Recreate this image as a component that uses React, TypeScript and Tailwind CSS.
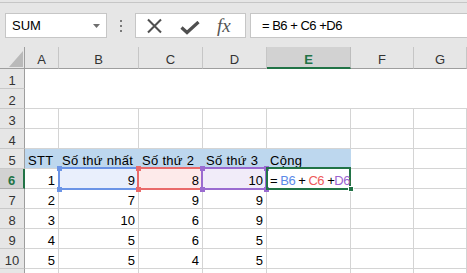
import React from "react";

const COLS = ["A", "B", "C", "D", "E", "F", "G"];
const W = ["w-[34px]", "w-[80px]", "w-[64px]", "w-[64px]", "w-[84px]", "w-[63px]", "w-[53px]"];

const cellBase =
  "relative shrink-0 h-full border-r border-b border-[#d4d4d4] px-[3px] pt-[5px] leading-[14px] text-[13px] whitespace-nowrap text-black";

function RowHeader({ n, active }: { n: number | null; active?: boolean }) {
  return active ? (
    <div className="w-[25px] shrink-0 h-full bg-[#d2d2d2] border-b border-[#ababab] border-r-2 border-r-[#217346] text-center pt-[5px] leading-[14px] text-[13px] font-bold text-[#217346]">
      {n}
    </div>
  ) : (
    <div className="w-[25px] shrink-0 h-full bg-[#e6e6e6] border-b border-[#c8c8c8] border-r border-r-[#9e9e9e] text-center pt-[5px] leading-[14px] text-[13px] text-[#333]">
      {n}
    </div>
  );
}

function Handles({ color }: { color: string }) {
  return (
    <>
      <div className={`absolute left-[-1px] top-[-1px] w-[5px] h-[5px] ${color}`} />
      <div className={`absolute right-[-2px] top-[-1px] w-[5px] h-[5px] ${color}`} />
      <div className={`absolute left-[-1px] bottom-[-2px] w-[5px] h-[5px] ${color}`} />
      <div className={`absolute right-[-2px] bottom-[-2px] w-[5px] h-[5px] ${color}`} />
    </>
  );
}

function DataRow({ n, vals }: { n: number | null; vals: (string | null)[] }) {
  return (
    <div className="flex h-[20px]">
      <RowHeader n={n} />
      {W.map((w, i) => (
        <div key={i} className={`${cellBase} ${w} text-right`}>
          {vals[i] ?? ""}
        </div>
      ))}
    </div>
  );
}

export default function App() {
  const data: [number | null, (string | null)[]][] = [
    [7, ["2", "7", "9", "9", null, null, null]],
    [8, ["3", "10", "6", "9", null, null, null]],
    [9, ["4", "5", "6", "5", null, null, null]],
    [10, ["5", "5", "4", "5", null, null, null]],
    [null, [null, null, null, null, null, null, null]],
  ];
  const headers5 = ["STT", "Số thứ nhất", "Số thứ 2", "Số thứ 3", "Cộng"];

  return (
    <div className="w-[467px] h-[273px] overflow-hidden bg-[#e6e6e6] font-['Liberation_Sans',Arial,sans-serif]">
      {/* top strip */}
      <div className="h-[3px] border-b border-[#c6c6c6] bg-[#e6e6e6]" />
      {/* formula toolbar */}
      <div className="h-[44px] pt-[10px] flex items-start">
        <div className="ml-[5px] w-[102px] h-[25px] bg-white border border-[#c6c6c6] flex items-center pl-[6px] pr-[6px] text-[13px] text-black">
          <span className="flex-1 leading-[14px]">SUM</span>
          <svg width="7" height="4" viewBox="0 0 7 4">
            <path d="M0 0 L7 0 L3.5 4 Z" fill="#6e6e6e" />
          </svg>
        </div>
        <div className="w-[28px] h-[25px] flex flex-col items-center justify-center gap-[3px]">
          <div className="w-[2px] h-[2px] bg-[#7a7a7a]" />
          <div className="w-[2px] h-[2px] bg-[#7a7a7a]" />
          <div className="w-[2px] h-[2px] bg-[#7a7a7a]" />
        </div>
        <div className="w-[111px] h-[25px] bg-white border border-[#c6c6c6] flex items-center">
          <svg width="18" height="16" viewBox="0 0 18 16" className="ml-[10px]">
            <path d="M2 1.5 L15 14.5 M15 1.5 L2 14.5" stroke="#4f4f4f" strokeWidth="2.1" />
          </svg>
          <svg width="20" height="14" viewBox="0 0 20 14" className="ml-[16px] mt-[4px]">
            <path d="M1.5 6.5 L7 11.5 L18.5 1" stroke="#4f4f4f" strokeWidth="3.2" fill="none" />
          </svg>
          <span className="ml-[17px] font-['Liberation_Serif',serif] italic text-[19px] leading-[20px] text-[#555]">fx</span>
        </div>
        <div className="ml-[4px] flex-1 h-[25px] bg-white border border-[#c6c6c6] border-r-0 flex items-center pl-[11px] text-[13px] tracking-[-0.5px] text-black">
          = B6 + C6 +D6
        </div>
      </div>

      {/* sheet */}
      <div className="bg-white">
        {/* column headers */}
        <div className="flex h-[22px] bg-[#e6e6e6]">
          <div className="relative w-[25px] shrink-0 h-full border-r border-b border-[#9e9e9e]">
            <svg width="14" height="16" viewBox="0 0 14 16" className="absolute left-[9px] top-[4px]">
              <path d="M14 0 L14 16 L0 16 Z" fill="#b9b9b9" />
            </svg>
          </div>
          {COLS.map((c, i) =>
            c === "E" ? (
              <div
                key={c}
                className={`${W[i]} shrink-0 h-full bg-[#d2d2d2] border-r border-r-[#bdbdbd] border-b-2 border-b-[#217346] text-center pt-[6px] leading-[14px] text-[13px] font-bold text-[#217346]`}
              >
                {c}
              </div>
            ) : (
              <div
                key={c}
                className={`${W[i]} shrink-0 h-full border-r border-r-[#c6c6c6] border-b border-b-[#9e9e9e] text-center pt-[6px] leading-[14px] text-[13px] text-[#333]`}
              >
                {c}
              </div>
            )
          )}
        </div>

        {/* rows 1-2 merged */}
        <div className="flex h-[40px]">
          <div className="flex flex-col w-[25px] shrink-0">
            <div className="h-[20px]">
              <RowHeader n={1} />
            </div>
            <div className="h-[20px]">
              <RowHeader n={2} />
            </div>
          </div>
          <div className="flex-1 h-full border-b border-[#d4d4d4] bg-white" />
        </div>

        <DataRow n={3} vals={[null, null, null, null, null, null, null]} />
        <DataRow n={4} vals={[null, null, null, null, null, null, null]} />

        {/* row 5 */}
        <div className="flex h-[20px]">
          <RowHeader n={5} />
          {W.map((w, i) =>
            i < 5 ? (
              <div key={i} className={`${cellBase} ${w} bg-[#bdd7ee] border-r-[#bdd7ee] tracking-[0.3px]`}>
                {headers5[i]}
              </div>
            ) : (
              <div key={i} className={`${cellBase} ${w}`} />
            )
          )}
        </div>

        {/* row 6 */}
        <div className="flex h-[20px]">
          <RowHeader n={6} active />
          <div className={`${cellBase} ${W[0]} text-right`}>1</div>
          <div className={`${cellBase} ${W[1]} text-right`}>
            <div className="absolute left-[-1px] top-[-2px] w-[81px] h-[23px] z-10">
              <div className="absolute inset-0 border-2 border-[#6b94e6] bg-[#e9effc]" />
              <Handles color="bg-[#6b94e6]" />
            </div>
            <span className="relative z-20">9</span>
          </div>
          <div className={`${cellBase} ${W[2]} text-right`}>
            <div className="absolute left-[-2px] top-[-2px] w-[66px] h-[23px] z-10">
              <div className="absolute inset-0 border-2 border-[#e96a6a] bg-[#fdeaea]" />
              <Handles color="bg-[#e96a6a]" />
            </div>
            <span className="relative z-20">8</span>
          </div>
          <div className={`${cellBase} ${W[3]} text-right`}>
            <div className="absolute left-[-2px] top-[-2px] w-[66px] h-[23px] z-10">
              <div className="absolute inset-0 border-2 border-[#9a6bd0] bg-[#f1ecf9]" />
              <Handles color="bg-[#9a6bd0]" />
            </div>
            <span className="relative z-20">10</span>
          </div>
          <div className={`${cellBase} ${W[4]} tracking-[-0.5px]`}>
            <div className="absolute left-[-1px] top-[-2px] w-[85px] h-[23px] z-10 border-2 border-[#217346]" />
            <div className="absolute right-[-4px] bottom-[-4px] w-[6px] h-[6px] z-10 bg-[#217346] border border-white" />
            <span className="relative z-20">
              = <span className="text-[#5b8ae8]">B6</span> + <span className="text-[#ee5a5a]">C6</span> +
              <span className="text-[#9a63cf]">D6</span>
            </span>
          </div>
          <div className={`${cellBase} ${W[5]}`} />
          <div className={`${cellBase} ${W[6]}`} />
        </div>

        {data.map(([n, v], idx) => (
          <DataRow key={idx} n={n} vals={v} />
        ))}
      </div>
    </div>
  );
}
